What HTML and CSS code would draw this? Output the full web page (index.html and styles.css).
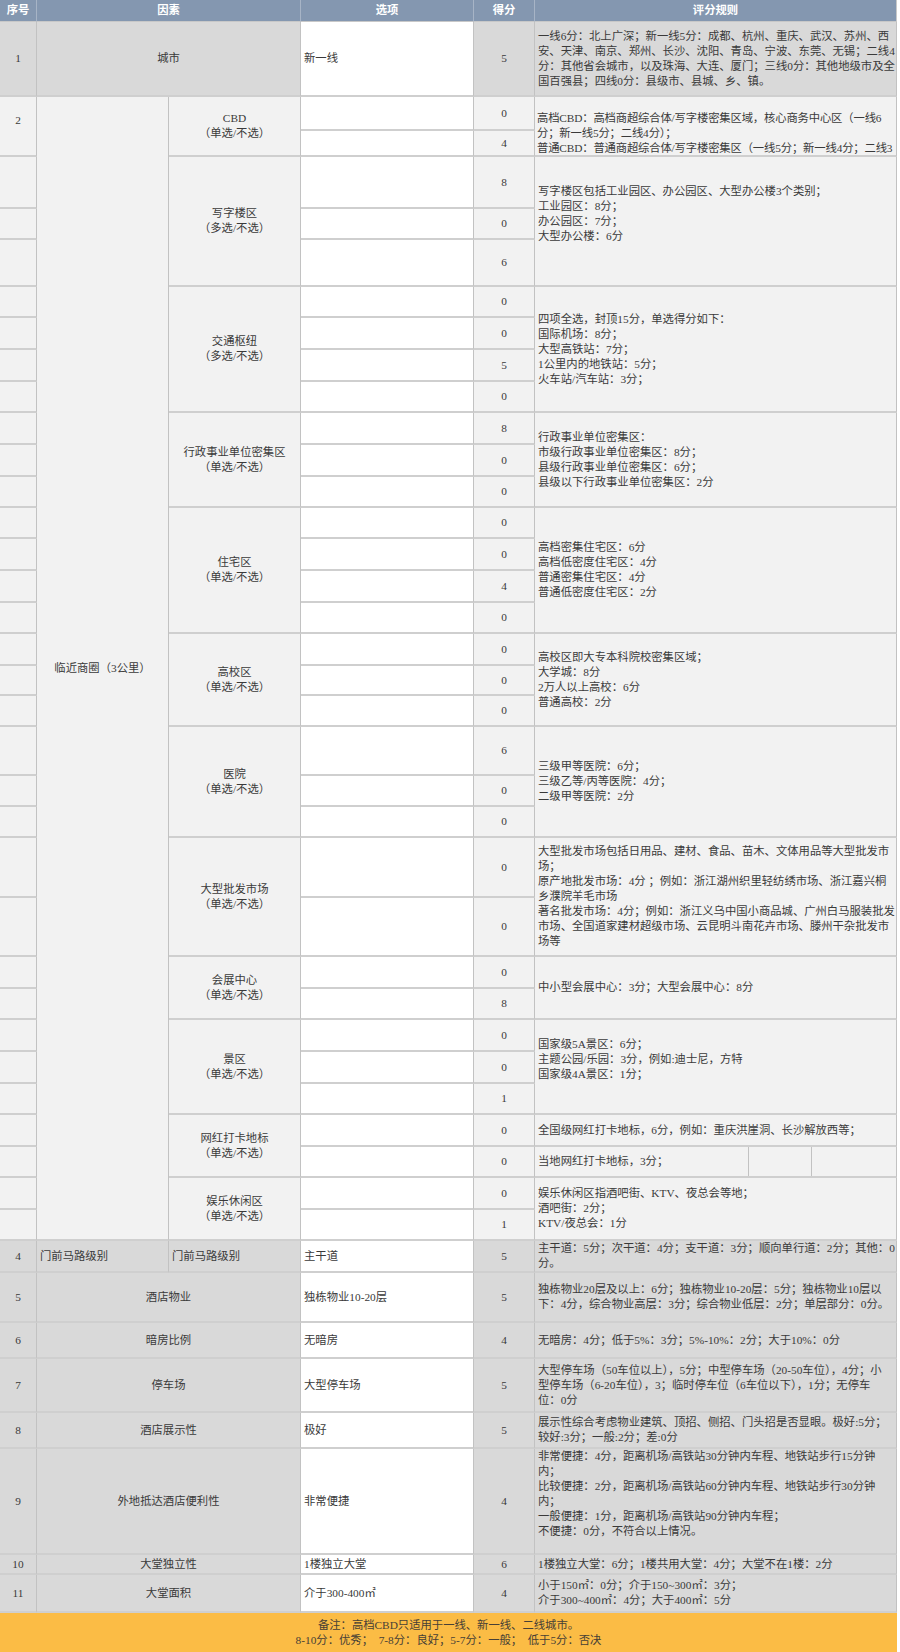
FILE: index.html
```html
<!DOCTYPE html>
<html lang="zh-CN">
<head>
<meta charset="utf-8">
<title>酒店选址评分表</title>
<link rel="stylesheet" href="styles.css">
</head>
<body>
<div class="sheet">
  <div class="h"><span>序号</span></div>
  <div class="h c2"><span>因素</span></div>
  <div class="h"><span>选项</span></div>
  <div class="h"><span>得分</span></div>
  <div class="h last"><span>评分规则</span></div>

  <!-- 1 城市 -->
  <div class="cell g ctr"><span>1</span></div>
  <div class="cell g ctr c2"><span>城市</span></div>
  <div class="cell opt"><span>新一线</span></div>
  <div class="cell g ctr"><span>5</span></div>
  <div class="cell g rule"><div>一线6分：北上广深；新一线5分：成都、杭州、重庆、武汉、苏州、西<br>安、天津、南京、郑州、长沙、沈阳、青岛、宁波、东莞、无锡；二线4<br>分：其他省会城市，以及珠海、大连、厦门；三线0分：其他地级市及全<br>国百强县；四线0分：县级市、县城、乡、镇。</div></div>

  <!-- 2 临近商圈 : CBD -->
  <div class="cell ctr r2 num2"><span>2</span></div>
  <div class="cell ctr r33"><span>临近商圈（3公里）</span></div>
  <div class="cell ctr r2"><span>CBD<br>（单选/不选）</span></div>
  <div class="cell opt"></div>
  <div class="cell ctr"><span>0</span></div>
  <div class="cell rule r2 cbd"><div>高档CBD：高档商超综合体/写字楼密集区域，核心商务中心区（一线6<br>分；新一线5分；二线4分）；<br>普通CBD：普通商超综合体/写字楼密集区（一线5分；新一线4分；二线3</div></div>
  <div class="cell opt"></div>
  <div class="cell ctr"><span>4</span></div>

  <!-- 写字楼区 -->
  <div class="cell"></div>
  <div class="cell ctr r3"><span>写字楼区<br>（多选/不选）</span></div>
  <div class="cell opt"></div>
  <div class="cell ctr"><span>8</span></div>
  <div class="cell rule r3"><div class="tail">写字楼区包括工业园区、办公园区、大型办公楼3个类别；<br>工业园区：8分；<br>办公园区：7分；<br>大型办公楼：6分</div></div>
  <div class="cell"></div>
  <div class="cell opt"></div>
  <div class="cell ctr"><span>0</span></div>
  <div class="cell"></div>
  <div class="cell opt"></div>
  <div class="cell ctr"><span>6</span></div>

  <!-- 交通枢纽 -->
  <div class="cell"></div>
  <div class="cell ctr r4"><span>交通枢纽<br>（多选/不选）</span></div>
  <div class="cell opt"></div>
  <div class="cell ctr"><span>0</span></div>
  <div class="cell rule r4"><div>四项全选，封顶15分，单选得分如下：<br>国际机场：8分；<br>大型高铁站：7分；<br>1公里内的地铁站：5分；<br>火车站/汽车站：3分；</div></div>
  <div class="cell"></div>
  <div class="cell opt"></div>
  <div class="cell ctr"><span>0</span></div>
  <div class="cell"></div>
  <div class="cell opt"></div>
  <div class="cell ctr"><span>5</span></div>
  <div class="cell"></div>
  <div class="cell opt"></div>
  <div class="cell ctr"><span>0</span></div>

  <!-- 行政事业单位密集区 -->
  <div class="cell"></div>
  <div class="cell ctr r3"><span>行政事业单位密集区<br>（单选/不选）</span></div>
  <div class="cell opt"></div>
  <div class="cell ctr"><span>8</span></div>
  <div class="cell rule r3"><div>行政事业单位密集区：<br>市级行政事业单位密集区：8分；<br>县级行政事业单位密集区：6分；<br>县级以下行政事业单位密集区：2分</div></div>
  <div class="cell"></div>
  <div class="cell opt"></div>
  <div class="cell ctr"><span>0</span></div>
  <div class="cell"></div>
  <div class="cell opt"></div>
  <div class="cell ctr"><span>0</span></div>

  <!-- 住宅区 -->
  <div class="cell"></div>
  <div class="cell ctr r4"><span>住宅区<br>（单选/不选）</span></div>
  <div class="cell opt"></div>
  <div class="cell ctr"><span>0</span></div>
  <div class="cell rule r4"><div>高档密集住宅区：6分<br>高档低密度住宅区：4分<br>普通密集住宅区：4分<br>普通低密度住宅区：2分</div></div>
  <div class="cell"></div>
  <div class="cell opt"></div>
  <div class="cell ctr"><span>0</span></div>
  <div class="cell"></div>
  <div class="cell opt"></div>
  <div class="cell ctr"><span>4</span></div>
  <div class="cell"></div>
  <div class="cell opt"></div>
  <div class="cell ctr"><span>0</span></div>

  <!-- 高校区 -->
  <div class="cell"></div>
  <div class="cell ctr r3"><span>高校区<br>（单选/不选）</span></div>
  <div class="cell opt"></div>
  <div class="cell ctr"><span>0</span></div>
  <div class="cell rule r3"><div>高校区即大专本科院校密集区域；<br>大学城：8分<br>2万人以上高校：6分<br>普通高校：2分</div></div>
  <div class="cell"></div>
  <div class="cell opt"></div>
  <div class="cell ctr"><span>0</span></div>
  <div class="cell"></div>
  <div class="cell opt"></div>
  <div class="cell ctr"><span>0</span></div>

  <!-- 医院 -->
  <div class="cell"></div>
  <div class="cell ctr r3"><span>医院<br>（单选/不选）</span></div>
  <div class="cell opt"></div>
  <div class="cell ctr"><span>6</span></div>
  <div class="cell rule r3"><div>三级甲等医院：6分；<br>三级乙等/丙等医院：4分；<br>二级甲等医院：2分</div></div>
  <div class="cell"></div>
  <div class="cell opt"></div>
  <div class="cell ctr"><span>0</span></div>
  <div class="cell"></div>
  <div class="cell opt"></div>
  <div class="cell ctr"><span>0</span></div>

  <!-- 大型批发市场 -->
  <div class="cell"></div>
  <div class="cell ctr r2"><span>大型批发市场<br>（单选/不选）</span></div>
  <div class="cell opt"></div>
  <div class="cell ctr"><span>0</span></div>
  <div class="cell rule r2"><div>大型批发市场包括日用品、建材、食品、苗木、文体用品等大型批发市<br>场；<br>原产地批发市场：4分 ；例如：浙江湖州织里轻纺绣市场、浙江嘉兴桐<br>乡濮院羊毛市场<br>著名批发市场：4分；例如：浙江义乌中国小商品城、广州白马服装批发<br>市场、全国道家建材超级市场、云昆明斗南花卉市场、滕州干杂批发市<br>场等</div></div>
  <div class="cell"></div>
  <div class="cell opt"></div>
  <div class="cell ctr"><span>0</span></div>

  <!-- 会展中心 -->
  <div class="cell"></div>
  <div class="cell ctr r2"><span>会展中心<br>（单选/不选）</span></div>
  <div class="cell opt"></div>
  <div class="cell ctr"><span>0</span></div>
  <div class="cell rule r2"><div>中小型会展中心：3分；大型会展中心：8分</div></div>
  <div class="cell"></div>
  <div class="cell opt"></div>
  <div class="cell ctr"><span>8</span></div>

  <!-- 景区 -->
  <div class="cell"></div>
  <div class="cell ctr r3"><span>景区<br>（单选/不选）</span></div>
  <div class="cell opt"></div>
  <div class="cell ctr"><span>0</span></div>
  <div class="cell rule r3"><div class="tail">国家级5A景区：6分；<br>主题公园/乐园：3分，例如:迪士尼，方特<br>国家级4A景区：1分；</div></div>
  <div class="cell"></div>
  <div class="cell opt"></div>
  <div class="cell ctr"><span>0</span></div>
  <div class="cell"></div>
  <div class="cell opt"></div>
  <div class="cell ctr"><span>1</span></div>

  <!-- 网红打卡地标 -->
  <div class="cell"></div>
  <div class="cell ctr r2"><span>网红打卡地标<br>（单选/不选）</span></div>
  <div class="cell opt"></div>
  <div class="cell ctr"><span>0</span></div>
  <div class="cell rule"><div>全国级网红打卡地标，6分，例如：重庆洪崖洞、长沙解放西等；</div></div>
  <div class="cell"></div>
  <div class="cell opt"></div>
  <div class="cell ctr"><span>0</span></div>
  <div class="cell split">
    <div class="sp-a">当地网红打卡地标，3分；</div>
    <div class="sp-b"></div>
    <div class="sp-c"></div>
  </div>

  <!-- 娱乐休闲区 -->
  <div class="cell"></div>
  <div class="cell ctr r2"><span>娱乐休闲区<br>（单选/不选）</span></div>
  <div class="cell opt"></div>
  <div class="cell ctr"><span>0</span></div>
  <div class="cell rule r2"><div>娱乐休闲区指酒吧街、KTV、夜总会等地；<br>酒吧街：2分；<br>KTV/夜总会：1分</div></div>
  <div class="cell"></div>
  <div class="cell opt"></div>
  <div class="cell ctr"><span>1</span></div>

  <!-- 4 -->
  <div class="cell g ctr"><span>4</span></div>
  <div class="cell g lft"><span>门前马路级别</span></div>
  <div class="cell g lft"><span>门前马路级别</span></div>
  <div class="cell opt"><span>主干道</span></div>
  <div class="cell g ctr"><span>5</span></div>
  <div class="cell g rule"><div>主干道：5分；次干道：4分；支干道：3分；顺向单行道：2分；其他：0<br>分。</div></div>

  <!-- 5 -->
  <div class="cell g ctr"><span>5</span></div>
  <div class="cell g ctr c2"><span>酒店物业</span></div>
  <div class="cell opt"><span>独栋物业10-20层</span></div>
  <div class="cell g ctr"><span>5</span></div>
  <div class="cell g rule"><div>独栋物业20层及以上：6分；独栋物业10-20层：5分；独栋物业10层以<br>下：4分，综合物业高层：3分；综合物业低层：2分；单层部分：0分。</div></div>

  <!-- 6 -->
  <div class="cell g ctr"><span>6</span></div>
  <div class="cell g ctr c2"><span>暗房比例</span></div>
  <div class="cell opt"><span>无暗房</span></div>
  <div class="cell g ctr"><span>4</span></div>
  <div class="cell g rule"><div>无暗房：4分；低于5%：3分；5%-10%：2分；大于10%：0分</div></div>

  <!-- 7 -->
  <div class="cell g ctr"><span>7</span></div>
  <div class="cell g ctr c2"><span>停车场</span></div>
  <div class="cell opt"><span>大型停车场</span></div>
  <div class="cell g ctr"><span>5</span></div>
  <div class="cell g rule"><div>大型停车场（50车位以上），5分；中型停车场（20-50车位），4分；小<br>型停车场（6-20车位），3；临时停车位（6车位以下），1分；无停车<br>位：0分</div></div>

  <!-- 8 -->
  <div class="cell g ctr"><span>8</span></div>
  <div class="cell g ctr c2"><span>酒店展示性</span></div>
  <div class="cell opt"><span>极好</span></div>
  <div class="cell g ctr"><span>5</span></div>
  <div class="cell g rule"><div>展示性综合考虑物业建筑、顶招、侧招、门头招是否显眼。极好:5分；<br>较好:3分；一般:2分；差:0分</div></div>

  <!-- 9 -->
  <div class="cell g ctr"><span>9</span></div>
  <div class="cell g ctr c2"><span>外地抵达酒店便利性</span></div>
  <div class="cell opt"><span>非常便捷</span></div>
  <div class="cell g ctr"><span>4</span></div>
  <div class="cell g rule"><div class="tail">非常便捷：4分，距离机场/高铁站30分钟内车程、地铁站步行15分钟<br>内；<br>比较便捷：2分，距离机场/高铁站60分钟内车程、地铁站步行30分钟<br>内；<br>一般便捷：1分，距离机场/高铁站90分钟内车程；<br>不便捷：0分，不符合以上情况。</div></div>

  <!-- 10 -->
  <div class="cell g ctr"><span>10</span></div>
  <div class="cell g ctr c2"><span>大堂独立性</span></div>
  <div class="cell opt"><span>1楼独立大堂</span></div>
  <div class="cell g ctr"><span>6</span></div>
  <div class="cell g rule"><div>1楼独立大堂：6分；1楼共用大堂：4分；大堂不在1楼：2分</div></div>

  <!-- 11 -->
  <div class="cell g ctr"><span>11</span></div>
  <div class="cell g ctr c2"><span>大堂面积</span></div>
  <div class="cell opt"><span>介于300-400㎡</span></div>
  <div class="cell g ctr"><span>4</span></div>
  <div class="cell g rule"><div>小于150㎡：0分；介于150~300㎡：3分；<br>介于300~400㎡：4分；大于400㎡：5分</div></div>

  <!-- footer -->
  <div class="note"><div>备注：高档CBD只适用于一线、新一线、二线城市。<br>8-10分：优秀；　7-8分：良好；5-7分：一般；　低于5分：否决</div></div>
</div>
</body>
</html>
```

FILE: styles.css
```css
* {
  box-sizing: border-box;
  margin: 0;
  padding: 0;
}

body {
  margin: 0;
  background: #ffffff;
  font-family: "Liberation Serif", "Noto Sans CJK SC", serif;
  font-size: 11.33px;
  line-height: 15px;
  color: #3a3a3a;
}

.sheet {
  display: grid;
  width: 897px;
  grid-template-columns: 37px 132px 132px 173px 61px 362px;
  grid-template-rows:
    22px 75px
    34px 26px
    52px 31px 47px
    31px 32px 32px 31px
    32px 32px 31px
    31px 32px 32px 31px
    32px 30px 31px
    49px 31px 31px
    60px 59px
    32px 31px
    32px 32px 31px
    32px 31px
    32px 31px
    32px 50px 36px 54px 36px 106px 20px 38px
    39px;
}

.h {
  display: flex;
  align-items: center;
  justify-content: center;
  background: #8497b0;
  color: #ffffff;
  font-weight: bold;
  border-right: 1px solid #a7b4c6;
  border-bottom: 1px solid #c8c8c8;
}

.h.last {
  border-right: 1px solid #c8c8c8;
}

.cell {
  display: flex;
  align-items: center;
  overflow: hidden;
  background: #f2f2f2;
  border-right: 1px solid #c2c2c2;
  border-bottom: 2px solid #cfcfcf;
}

.g {
  background: #d9d9d9;
}

.opt {
  background: #ffffff;
  padding-left: 3px;
}

.ctr {
  justify-content: center;
  text-align: center;
}

.lft {
  padding-left: 3px;
}

.rule {
  padding-left: 3px;
  white-space: nowrap;
}

.tail {
  padding-bottom: 15px;
}

.cbd {
  align-items: flex-start;
  padding-top: 14px;
  padding-left: 2px;
  letter-spacing: -0.15px;
}

.num2 {
  padding-bottom: 12px;
}

.c2 {
  grid-column: span 2;
}

.r2 {
  grid-row: span 2;
}

.r3 {
  grid-row: span 3;
}

.r4 {
  grid-row: span 4;
}

.r33 {
  grid-row: span 33;
}

.split {
  display: grid;
  grid-template-columns: 214px 63px 1fr;
  align-items: stretch;
  white-space: nowrap;
}

.sp-a {
  display: flex;
  align-items: center;
  padding-left: 3px;
  border-right: 1px solid #c2c2c2;
}

.sp-b {
  border-right: 1px solid #c2c2c2;
}

.note {
  grid-column: 1 / -1;
  display: flex;
  align-items: center;
  justify-content: center;
  text-align: center;
  white-space: pre;
  background: #fbbc45;
  color: #474036;
}
```
